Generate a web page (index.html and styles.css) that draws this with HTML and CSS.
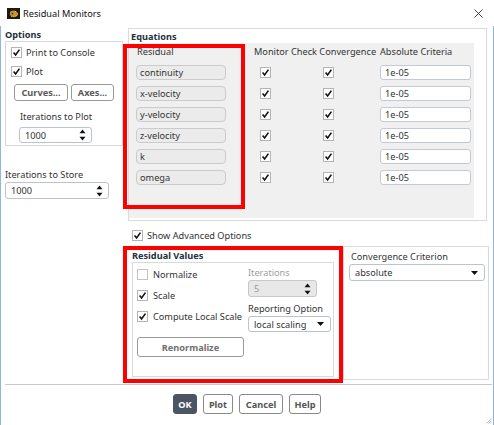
FILE: index.html
```html
<!DOCTYPE html>
<html lang="en">
<head>
<meta charset="utf-8">
<title>Residual Monitors</title>
<link rel="stylesheet" href="styles.css">
</head>
<body>
<div class="window">
  <div class="titlebar">
    <svg class="app-icon" viewBox="0 0 13 11">
      <rect width="13" height="11" fill="#1f1a10"/>
      <ellipse cx="7" cy="6" rx="4.2" ry="2.2" fill="#c9962e"/>
      <path d="M3 4.5c1.5-1.6 4.5-1.8 6.5-.6M4 8.2c2 .9 4.6.6 6-.8" stroke="#e8b84a" stroke-width="1" fill="none"/>
      <circle cx="5.5" cy="5.6" r="0.9" fill="#3a2a0a"/>
    </svg>
    <span class="title">Residual Monitors</span>
    <svg class="close" viewBox="0 0 9 9"><path d="M0.5 0.5 8.5 8.5M8.5 0.5 0.5 8.5"/></svg>
  </div>

  <div class="frame">
    <div class="main">
      <!-- Options column -->
      <div class="left">
        <div class="group-title">Options</div>
        <div class="options-box">
          <label class="check-row"><span class="cb"><svg viewBox="0 0 9 9"><path d="M1.6 4.6 3.6 7 7.4 1.6"/></svg></span>Print to Console</label>
          <label class="check-row"><span class="cb"><svg viewBox="0 0 9 9"><path d="M1.6 4.6 3.6 7 7.4 1.6"/></svg></span>Plot</label>
          <div class="btn-row">
            <button class="btn curves">Curves...</button>
            <button class="btn axes">Axes...</button>
          </div>
          <div class="field-label plot-label">Iterations to Plot</div>
          <div class="spin plot-spin"><span>1000</span>
            <svg class="arrows" viewBox="0 0 7 12"><polygon points="3.5,0.5 6.5,4.2 0.5,4.2"/><polygon points="0.5,7.8 6.5,7.8 3.5,11.5"/></svg>
          </div>
        </div>
        <div class="field-label store-label">Iterations to Store</div>
        <div class="spin store-spin"><span>1000</span>
          <svg class="arrows" viewBox="0 0 7 12"><polygon points="3.5,0.5 6.5,4.2 0.5,4.2"/><polygon points="0.5,7.8 6.5,7.8 3.5,11.5"/></svg>
        </div>
      </div>

      <!-- Equations and advanced options -->
      <div class="right">
        <div class="equations">
          <div class="group-title eq-title">Equations</div>
          <div class="eq-grid">
            <div class="head first">Residual</div>
            <div class="head">Monitor</div>
            <div class="head">Check Convergence</div>
            <div class="head">Absolute Criteria</div>

            <div class="name">continuity</div>
            <div class="cell mon"><span class="cb"><svg viewBox="0 0 9 9"><path d="M1.6 4.6 3.6 7 7.4 1.6"/></svg></span></div>
            <div class="cell conv"><span class="cb"><svg viewBox="0 0 9 9"><path d="M1.6 4.6 3.6 7 7.4 1.6"/></svg></span></div>
            <div class="crit">1e-05</div>

            <div class="name">x-velocity</div>
            <div class="cell mon"><span class="cb"><svg viewBox="0 0 9 9"><path d="M1.6 4.6 3.6 7 7.4 1.6"/></svg></span></div>
            <div class="cell conv"><span class="cb"><svg viewBox="0 0 9 9"><path d="M1.6 4.6 3.6 7 7.4 1.6"/></svg></span></div>
            <div class="crit">1e-05</div>

            <div class="name">y-velocity</div>
            <div class="cell mon"><span class="cb"><svg viewBox="0 0 9 9"><path d="M1.6 4.6 3.6 7 7.4 1.6"/></svg></span></div>
            <div class="cell conv"><span class="cb"><svg viewBox="0 0 9 9"><path d="M1.6 4.6 3.6 7 7.4 1.6"/></svg></span></div>
            <div class="crit">1e-05</div>

            <div class="name">z-velocity</div>
            <div class="cell mon"><span class="cb"><svg viewBox="0 0 9 9"><path d="M1.6 4.6 3.6 7 7.4 1.6"/></svg></span></div>
            <div class="cell conv"><span class="cb"><svg viewBox="0 0 9 9"><path d="M1.6 4.6 3.6 7 7.4 1.6"/></svg></span></div>
            <div class="crit">1e-05</div>

            <div class="name">k</div>
            <div class="cell mon"><span class="cb"><svg viewBox="0 0 9 9"><path d="M1.6 4.6 3.6 7 7.4 1.6"/></svg></span></div>
            <div class="cell conv"><span class="cb"><svg viewBox="0 0 9 9"><path d="M1.6 4.6 3.6 7 7.4 1.6"/></svg></span></div>
            <div class="crit">1e-05</div>

            <div class="name">omega</div>
            <div class="cell mon"><span class="cb"><svg viewBox="0 0 9 9"><path d="M1.6 4.6 3.6 7 7.4 1.6"/></svg></span></div>
            <div class="cell conv"><span class="cb"><svg viewBox="0 0 9 9"><path d="M1.6 4.6 3.6 7 7.4 1.6"/></svg></span></div>
            <div class="crit">1e-05</div>
          </div>
          <div class="highlight"></div>
        </div>

        <label class="check-row adv"><span class="cb"><svg viewBox="0 0 9 9"><path d="M1.6 4.6 3.6 7 7.4 1.6"/></svg></span>Show Advanced Options</label>

        <div class="lower">
          <div class="residual-values">
            <div class="group-title rv-title">Residual Values</div>
            <div class="rv-box">
              <div class="rv-left">
                <label class="check-row rv-row"><span class="cb empty"></span>Normalize</label>
                <label class="check-row rv-row"><span class="cb"><svg viewBox="0 0 9 9"><path d="M1.6 4.6 3.6 7 7.4 1.6"/></svg></span>Scale</label>
                <label class="check-row rv-row"><span class="cb"><svg viewBox="0 0 9 9"><path d="M1.6 4.6 3.6 7 7.4 1.6"/></svg></span>Compute Local Scale</label>
                <button class="btn renorm">Renormalize</button>
              </div>
              <div class="rv-right">
                <div class="field-label muted">Iterations</div>
                <div class="spin iter-spin disabled"><span>5</span>
                  <svg class="arrows" viewBox="0 0 7 12"><polygon points="3.5,0.5 6.5,4.2 0.5,4.2"/><polygon points="0.5,7.8 6.5,7.8 3.5,11.5"/></svg>
                </div>
                <div class="field-label report-label">Reporting Option</div>
                <div class="select report-select"><span>local scaling</span>
                  <svg class="caret" viewBox="0 0 7 4"><polygon points="0,0 7,0 3.5,4"/></svg>
                </div>
              </div>
            </div>
          </div>

          <div class="criterion">
            <div class="crit-label">Convergence Criterion</div>
            <div class="select crit-select"><span>absolute</span>
              <svg class="caret" viewBox="0 0 7 4"><polygon points="0,0 7,0 3.5,4"/></svg>
            </div>
          </div>
        </div>
      </div>
    </div>

    <div class="separator"></div>

    <div class="actions">
      <button class="btn action ok">OK</button>
      <button class="btn action plot">Plot</button>
      <button class="btn action cancel">Cancel</button>
      <button class="btn action help">Help</button>
    </div>

    <svg class="grip" viewBox="0 0 7 7"><path d="M6.5 1.5 1.5 6.5M6.5 3.5 3.5 6.5M6.5 5.5 5.5 6.5"/></svg>
  </div>
</div>
</body>
</html>
```

FILE: styles.css
```css
* { box-sizing: border-box; }

html, body {
  margin: 0;
  padding: 0;
}

body {
  width: 494px;
  height: 425px;
  overflow: hidden;
  background: #fff;
  font-family: "Noto Sans", "Liberation Sans", sans-serif;
  font-size: 9.2px;
  color: #333;
}

.window {
  width: 494px;
  height: 425px;
  display: flex;
  flex-direction: column;
  background: #fff;
}

/* ---- title bar ---- */
.titlebar {
  height: 26px;
  flex: none;
  display: flex;
  align-items: center;
  padding: 0 11px 0 7px;
}

.app-icon {
  width: 13px;
  height: 11px;
  margin-right: 3px;
}

.title {
  flex: 1;
  color: #111;
  font-size: 9.2px;
}

.close {
  width: 9px;
  height: 9px;
  stroke: #444;
  stroke-width: 1;
  fill: none;
}

/* ---- dialog body ---- */
.frame {
  flex: 1;
  position: relative;
  display: flex;
  flex-direction: column;
  border-left: 1px solid #8db7e3;
  border-right: 1px solid #8db7e3;
}

.main {
  display: flex;
  height: 357px;
  flex: none;
}

.group-title {
  font-weight: 700;
  color: #253040;
  height: 13px;
  line-height: 13px;
}

/* checkbox */
.cb {
  width: 11px;
  height: 11px;
  flex: none;
  border: 1px solid #b4b4b4;
  background: #fff;
  display: inline-flex;
  align-items: center;
  justify-content: center;
}

.cb svg {
  width: 9px;
  height: 9px;
  fill: none;
  stroke: #111;
  stroke-width: 1.6;
}

.check-row {
  display: flex;
  align-items: center;
  height: 19px;
  gap: 4px;
  color: #333;
}

/* buttons */
.btn {
  font: inherit;
  font-weight: 700;
  color: #5a5a5a;
  background: #fff;
  border: 1px solid #9a9a9a;
  border-radius: 3px;
  padding: 0;
  margin: 0;
  display: flex;
  align-items: center;
  justify-content: center;
}

/* text fields */
.spin,
.select {
  position: relative;
  display: flex;
  align-items: center;
  background: #fff;
  border: 1px solid #bcc3cc;
  border-radius: 3px;
  padding-left: 5px;
  color: #333;
}

.arrows {
  position: absolute;
  right: 5px;
  top: 50%;
  width: 7px;
  height: 12px;
  margin-top: -6px;
  fill: #111;
}

.caret {
  position: absolute;
  right: 6px;
  top: 50%;
  width: 7px;
  height: 4px;
  margin-top: -2px;
  fill: #111;
}

.field-label {
  height: 14px;
  line-height: 14px;
  color: #333;
}

/* ---- left column ---- */
.left {
  width: 118px;
  margin-left: 4px;
  flex: none;
}

.left > .group-title {
  margin-top: 2px;
}

.options-box {
  height: 105px;
  border: 1px solid #d8d8d8;
  padding: 1px 0 0 5px;
}

.btn-row {
  display: flex;
  gap: 3px;
  margin: 3px 0 0 3px;
}

.btn-row .btn {
  height: 17px;
}

.curves { width: 54px; }
.axes { width: 43px; }

.plot-label {
  margin: 9px 0 0 9px;
}

.plot-spin {
  width: 73px;
  height: 16px;
  margin: 3px 0 0 8px;
}

.store-label {
  margin-top: 22px;
}

.store-spin {
  width: 104px;
  height: 17px;
}

/* ---- right column ---- */
.right {
  width: 361px;
  margin-left: 5px;
  flex: none;
}

.equations {
  position: relative;
  width: 359px;
  height: 193px;
  margin-top: 2px;
  border: 1px solid #dadada;
}

.eq-title {
  height: 14px;
  line-height: 13px;
  padding: 1px 0 0 2px;
}

.eq-grid {
  width: 345px;
  height: 175px;
  background: #f0f0f0;
  display: grid;
  grid-template-columns: 118px 37px 89px 91px;
  grid-template-rows: 22px repeat(6, 21px);
  align-items: start;
  padding-left: 7px;
}

.head {
  padding-top: 3px;
  line-height: 12px;
  white-space: nowrap;
  color: #333;
}

.head.first { padding-left: 1px; }

.name {
  width: 90px;
  height: 15px;
  line-height: 13px;
  background: #ebebeb;
  border: 1px solid #cbcbcb;
  border-radius: 4px;
  padding-left: 3px;
}

.cell { padding-top: 2px; }
.mon { padding-left: 6px; }
.conv { padding-left: 32px; }

.crit {
  width: 91px;
  height: 15px;
  line-height: 13px;
  background: #fff;
  border: 1px solid #c3cad3;
  border-radius: 3px;
  padding-left: 4px;
}

/* red emphasis frame around the residual names */
.highlight {
  position: absolute;
  left: -6px;
  top: 15px;
  width: 122px;
  height: 165px;
  border: 4px solid #ff0000;
}

.adv {
  height: 18px;
  margin: 5px 0 2px 4px;
}

.lower {
  display: flex;
  height: 137px;
  margin-left: -5px;
}

.residual-values {
  width: 220px;
  height: 137px;
  flex: none;
  border: 4px solid #ff0000;
}

.rv-title {
  height: 12px;
  line-height: 12px;
  padding: 0 0 0 5px;
}

.rv-box {
  height: 115px;
  margin: 0 5px 0 5px;
  border: 1px solid #d6dbe0;
  display: flex;
  padding: 1px 0 0 4px;
}

.rv-left {
  width: 111px;
  flex: none;
}

.rv-row {
  height: 21px;
  gap: 5px;
}

.cb.empty {
  border-color: #c4c4c4;
}

.renorm {
  width: 107px;
  height: 20px;
  margin-top: 10px;
  color: #707070;
}

.rv-right {
  width: 83px;
  flex: none;
}

.muted {
  color: #a0a0a0;
  margin-top: 2px;
}

.iter-spin {
  width: 69px;
  height: 17px;
}

.spin.disabled {
  background: #e8e8e8;
  border-color: #c8c8c8;
  color: #9a9a9a;
}

.report-label {
  margin-top: 5px;
}

.report-select {
  width: 83px;
  height: 16px;
}

.criterion {
  width: 146px;
  height: 134px;
  flex: none;
  border: 1px solid #dadada;
  padding: 0 2px 0 6px;
}

.crit-label {
  height: 16px;
  line-height: 12px;
  padding: 4px 0 0 1px;
}

.crit-select {
  width: 136px;
  height: 17px;
  margin: 1px 0 0 -1px;
}

/* ---- footer ---- */
.separator {
  height: 1px;
  background: #c9c9c9;
  margin: 1px 1px 0 4px;
  flex: none;
}

.actions {
  display: flex;
  justify-content: center;
  gap: 6px;
  margin-top: 9px;
}

.action {
  height: 20px;
  border-color: #8a8a8a;
  color: #555;
}

.ok {
  width: 24px;
  background: #4b5563;
  border-color: #4b5563;
  color: #fff;
}

.plot { width: 30px; }
.cancel { width: 44px; }
.help { width: 32px; }

.grip {
  position: absolute;
  right: 1px;
  bottom: 1px;
  width: 7px;
  height: 7px;
  stroke: #b8b8b8;
  stroke-width: 1;
  fill: none;
}
```
